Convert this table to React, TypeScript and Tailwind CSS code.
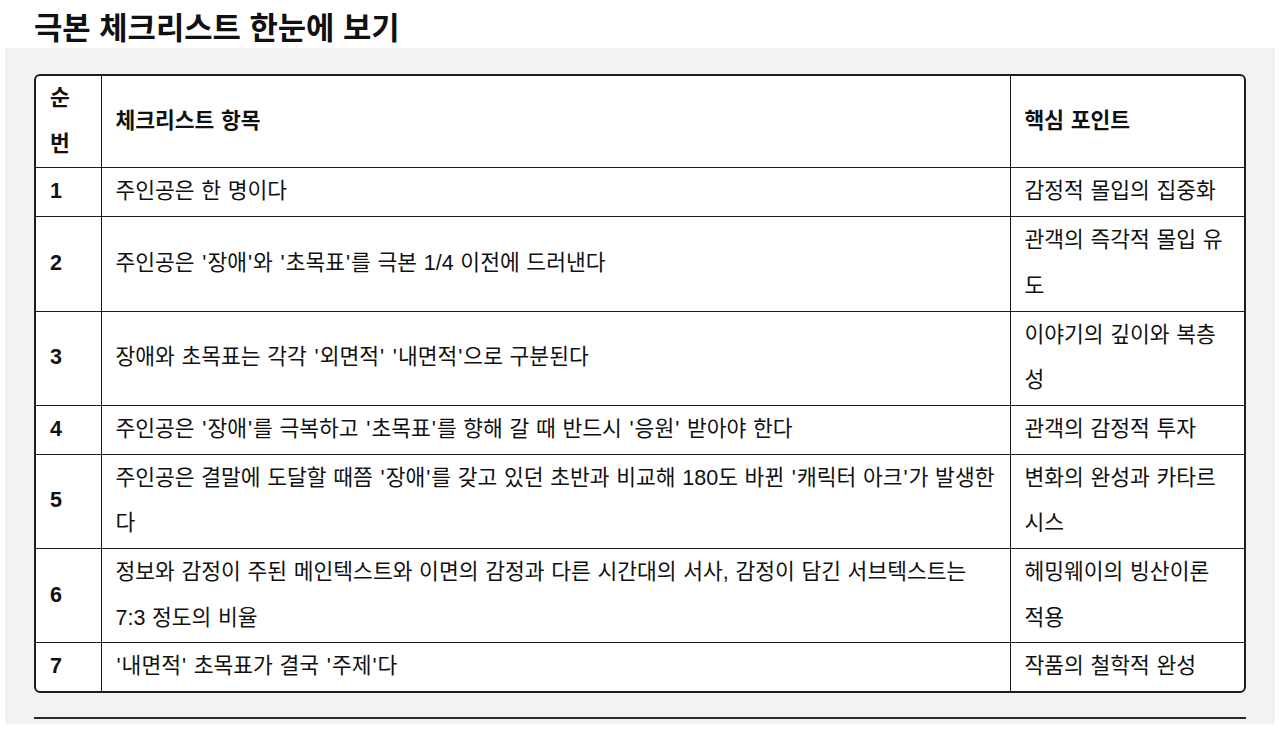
import React from "react";

type Row = {
  no: string;
  item: string;
  point: string;
};

const rows: Row[] = [
  { no: "1", item: "주인공은 한 명이다", point: "감정적 몰입의 집중화" },
  {
    no: "2",
    item: "주인공은 '장애'와 '초목표'를 극본 1/4 이전에 드러낸다",
    point: "관객의 즉각적 몰입 유도",
  },
  {
    no: "3",
    item: "장애와 초목표는 각각 '외면적' '내면적'으로 구분된다",
    point: "이야기의 깊이와 복층성",
  },
  {
    no: "4",
    item: "주인공은 '장애'를 극복하고 '초목표'를 향해 갈 때 반드시 '응원' 받아야 한다",
    point: "관객의 감정적 투자",
  },
  {
    no: "5",
    item: "주인공은 결말에 도달할 때쯤 '장애'를 갖고 있던 초반과 비교해 180도 바뀐 '캐릭터 아크'가 발생한다",
    point: "변화의 완성과 카타르시스",
  },
  {
    no: "6",
    item: "정보와 감정이 주된 메인텍스트와 이면의 감정과 다른 시간대의 서사, 감정이 담긴 서브텍스트는 7:3 정도의 비율",
    point: "헤밍웨이의 빙산이론 적용",
  },
  { no: "7", item: "'내면적' 초목표가 결국 '주제'다", point: "작품의 철학적 완성" },
];

// quotes sit a little looser in the original font
function Quoted({ text }: { text: string }) {
  const parts = text.split("'");
  return (
    <>
      {parts.map((part, i) => (
        <React.Fragment key={i}>
          {i > 0 && <span className="px-px">'</span>}
          {part}
        </React.Fragment>
      ))}
    </>
  );
}

export default function App() {
  return (
    <div className="min-h-screen bg-white text-[#111] font-['Liberation_Sans','Noto_Sans_CJK_KR',sans-serif]">
      <h2 className="pl-[34px] pt-[10px] text-[30.8px] font-bold leading-[38px]">
        극본 체크리스트 한눈에 보기
      </h2>

      <div className="mx-[5px] bg-[#f2f2f2] px-[29px] pt-[26px] pb-[5px]">
        <div className="overflow-hidden rounded-[6px] border-2 border-[#1c1c1c] bg-white">
          <table className="w-full table-fixed border-collapse text-[21.5px] leading-[45.7px] [word-spacing:0.7px]">
            <colgroup>
              <col className="w-[65px]" />
              <col />
              <col className="w-[234px]" />
            </colgroup>
            <thead>
              <tr>
                <th className="border-r border-b border-[#1c1c1c] px-[14px] text-left font-bold">
                  순번
                </th>
                <th className="border-r border-b border-[#1c1c1c] px-[14px] text-left font-bold">
                  체크리스트 항목
                </th>
                <th className="border-b border-[#1c1c1c] px-[14px] text-left font-bold">
                  핵심 포인트
                </th>
              </tr>
            </thead>
            <tbody>
              {rows.map((row, i) => {
                const last = i === rows.length - 1;
                return (
                  <tr key={row.no}>
                    <td
                      className={
                        last
                          ? "border-r border-[#1c1c1c] px-[14px] py-px font-bold"
                          : "border-r border-b border-[#1c1c1c] px-[14px] py-px font-bold"
                      }
                    >
                      {row.no}
                    </td>
                    <td
                      className={
                        last
                          ? "border-r border-[#1c1c1c] px-[14px] py-px"
                          : "border-r border-b border-[#1c1c1c] px-[14px] py-px"
                      }
                    >
                      <Quoted text={row.item} />
                    </td>
                    <td
                      className={
                        last
                          ? "px-[14px] py-px"
                          : "border-b border-[#1c1c1c] px-[14px] py-px"
                      }
                    >
                      {row.point}
                    </td>
                  </tr>
                );
              })}
            </tbody>
          </table>
        </div>

        <hr className="mt-[24px] border-t-2 border-[#2a2a2a]" />
      </div>
    </div>
  );
}
